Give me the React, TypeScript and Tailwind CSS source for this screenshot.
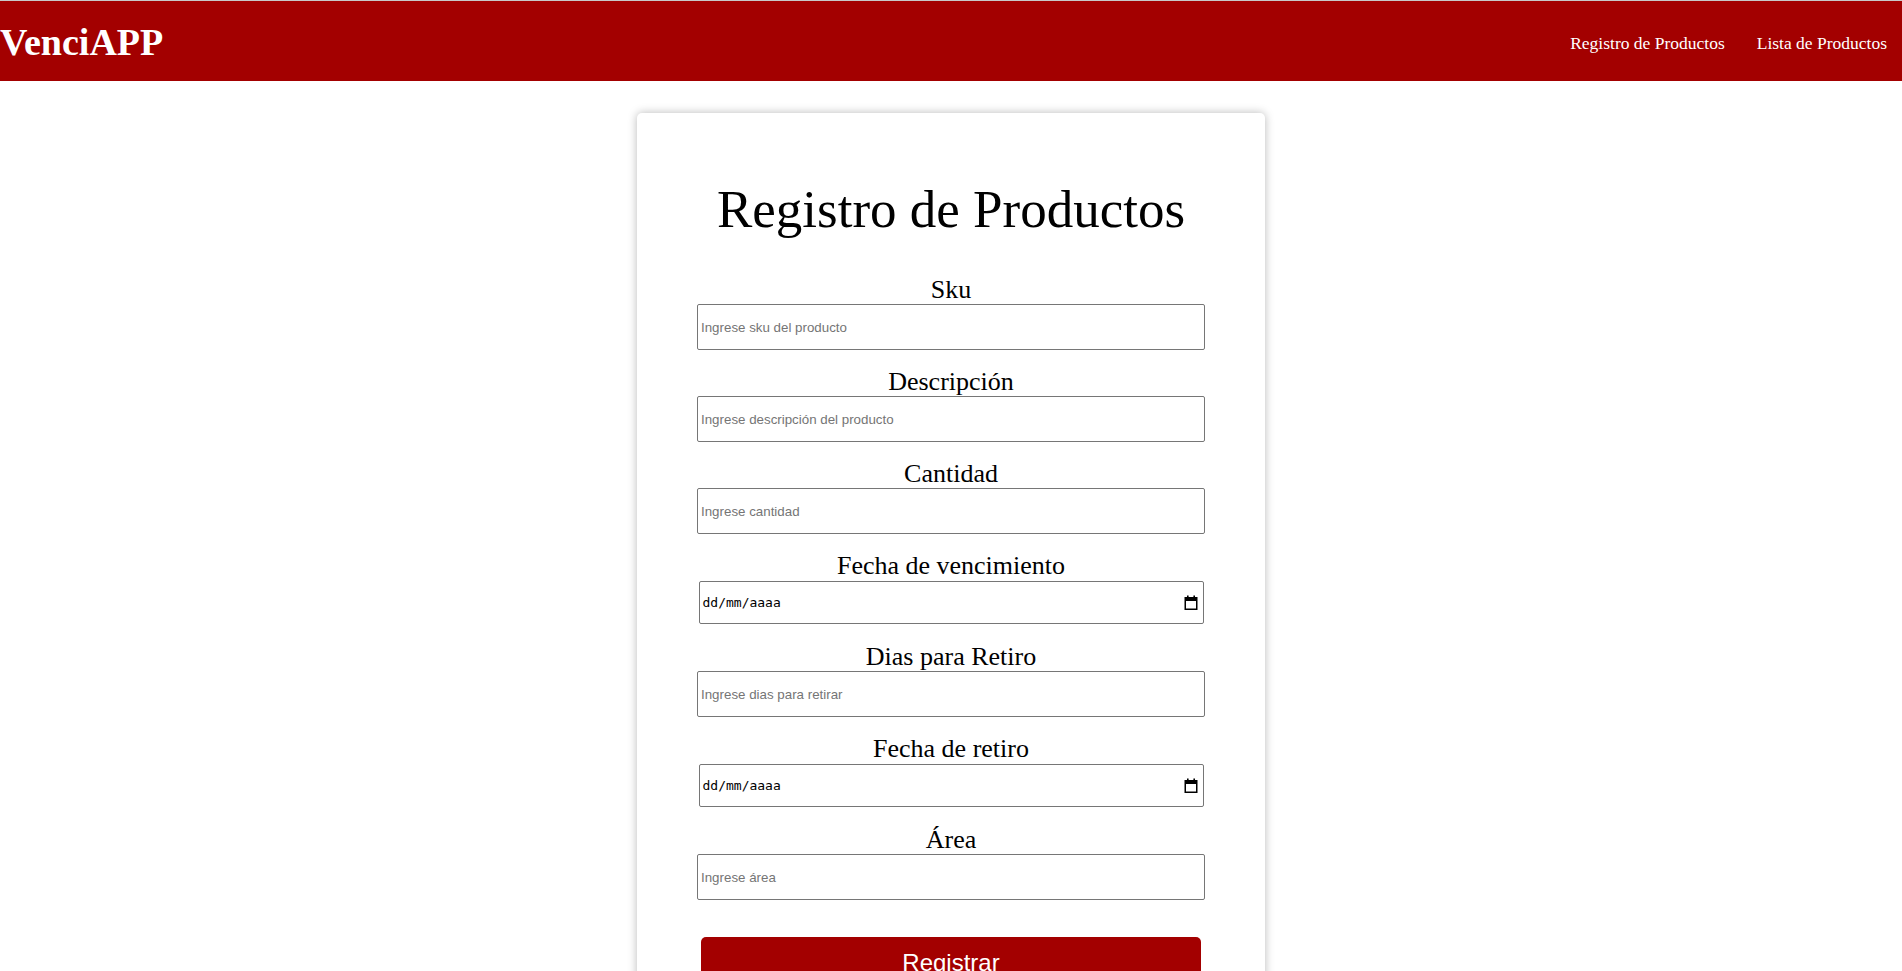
import React from "react";

const fields: { label: string; type: "text" | "date"; placeholder?: string }[] = [
  { label: "Sku", type: "text", placeholder: "Ingrese sku del producto" },
  { label: "Descripción", type: "text", placeholder: "Ingrese descripción del producto" },
  { label: "Cantidad", type: "text", placeholder: "Ingrese cantidad" },
  { label: "Fecha de vencimiento", type: "date" },
  { label: "Dias para Retiro", type: "text", placeholder: "Ingrese dias para retirar" },
  { label: "Fecha de retiro", type: "date" },
  { label: "Área", type: "text", placeholder: "Ingrese área" },
];

function CalendarIcon() {
  return (
    <svg width="14" height="16" viewBox="0 0 14 16" aria-hidden="true">
      <rect x="3" y="0.5" width="1.6" height="3" fill="#000" />
      <rect x="9.4" y="0.5" width="1.6" height="3" fill="#000" />
      <rect x="1.25" y="2.75" width="11.5" height="11.5" fill="none" stroke="#000" strokeWidth="1.5" />
      <rect x="1" y="2.5" width="12" height="3.5" fill="#000" />
    </svg>
  );
}

function DateField() {
  return (
    <div className="w-[505px] h-[43px] my-[1px] flex items-center justify-between pl-[3px] pr-[5px] border border-[#767676] rounded-[2px] bg-white">
      <span className="text-[13px] text-black font-['DejaVu_Sans_Mono','Liberation_Mono',monospace]">
        dd/mm/aaaa
      </span>
      <CalendarIcon />
    </div>
  );
}

export default function App() {
  return (
    <div className="h-screen overflow-hidden bg-white border-t border-[#c8c8c8] font-['Georgia','Liberation_Serif',serif]">
      {/* Header */}
      <header className="h-[80px] bg-[#a30000] flex items-center justify-between">
        <h1 className="text-[38px] font-bold text-white leading-none pt-[2px]">VenciAPP</h1>
        <nav className="flex items-center pr-[15px] pt-[4px]">
          <a className="text-[17.5px] text-white px-[16px]">Registro de Productos</a>
          <a className="text-[17.5px] text-white pl-[16px]">Lista de Productos</a>
        </nav>
      </header>

      {/* Card */}
      <main className="pt-[32px]">
        <form className="w-[628px] mx-auto bg-white rounded-[5px] shadow-[0_0_10px_rgba(0,0,0,0.28)] pt-[68px] pb-[60px] flex flex-col items-center">
          <h2 className="text-[53px] leading-[56px] text-black">Registro de Productos</h2>

          <div className="mt-[39px] flex flex-col items-center">
            {fields.map((f) => (
              <div key={f.label} className="flex flex-col items-center mb-[18px]">
                <label className="text-[26px] leading-[28px] text-black">{f.label}</label>
                {f.type === "date" ? (
                  <DateField />
                ) : (
                  <input
                    type="text"
                    placeholder={f.placeholder}
                    className="w-[508px] h-[46px] pl-[3px] border border-[#767676] rounded-[2px] text-[13.33px] font-['Liberation_Sans',Arial,sans-serif] text-black placeholder:text-[#757575] outline-none"
                  />
                )}
              </div>
            ))}
          </div>

          <button
            type="button"
            className="mt-[19px] w-[500px] h-[52px] bg-[#a30000] rounded-[5px] text-white text-[24px] font-['Liberation_Sans',Arial,sans-serif]"
          >
            Registrar
          </button>
        </form>
      </main>
    </div>
  );
}
